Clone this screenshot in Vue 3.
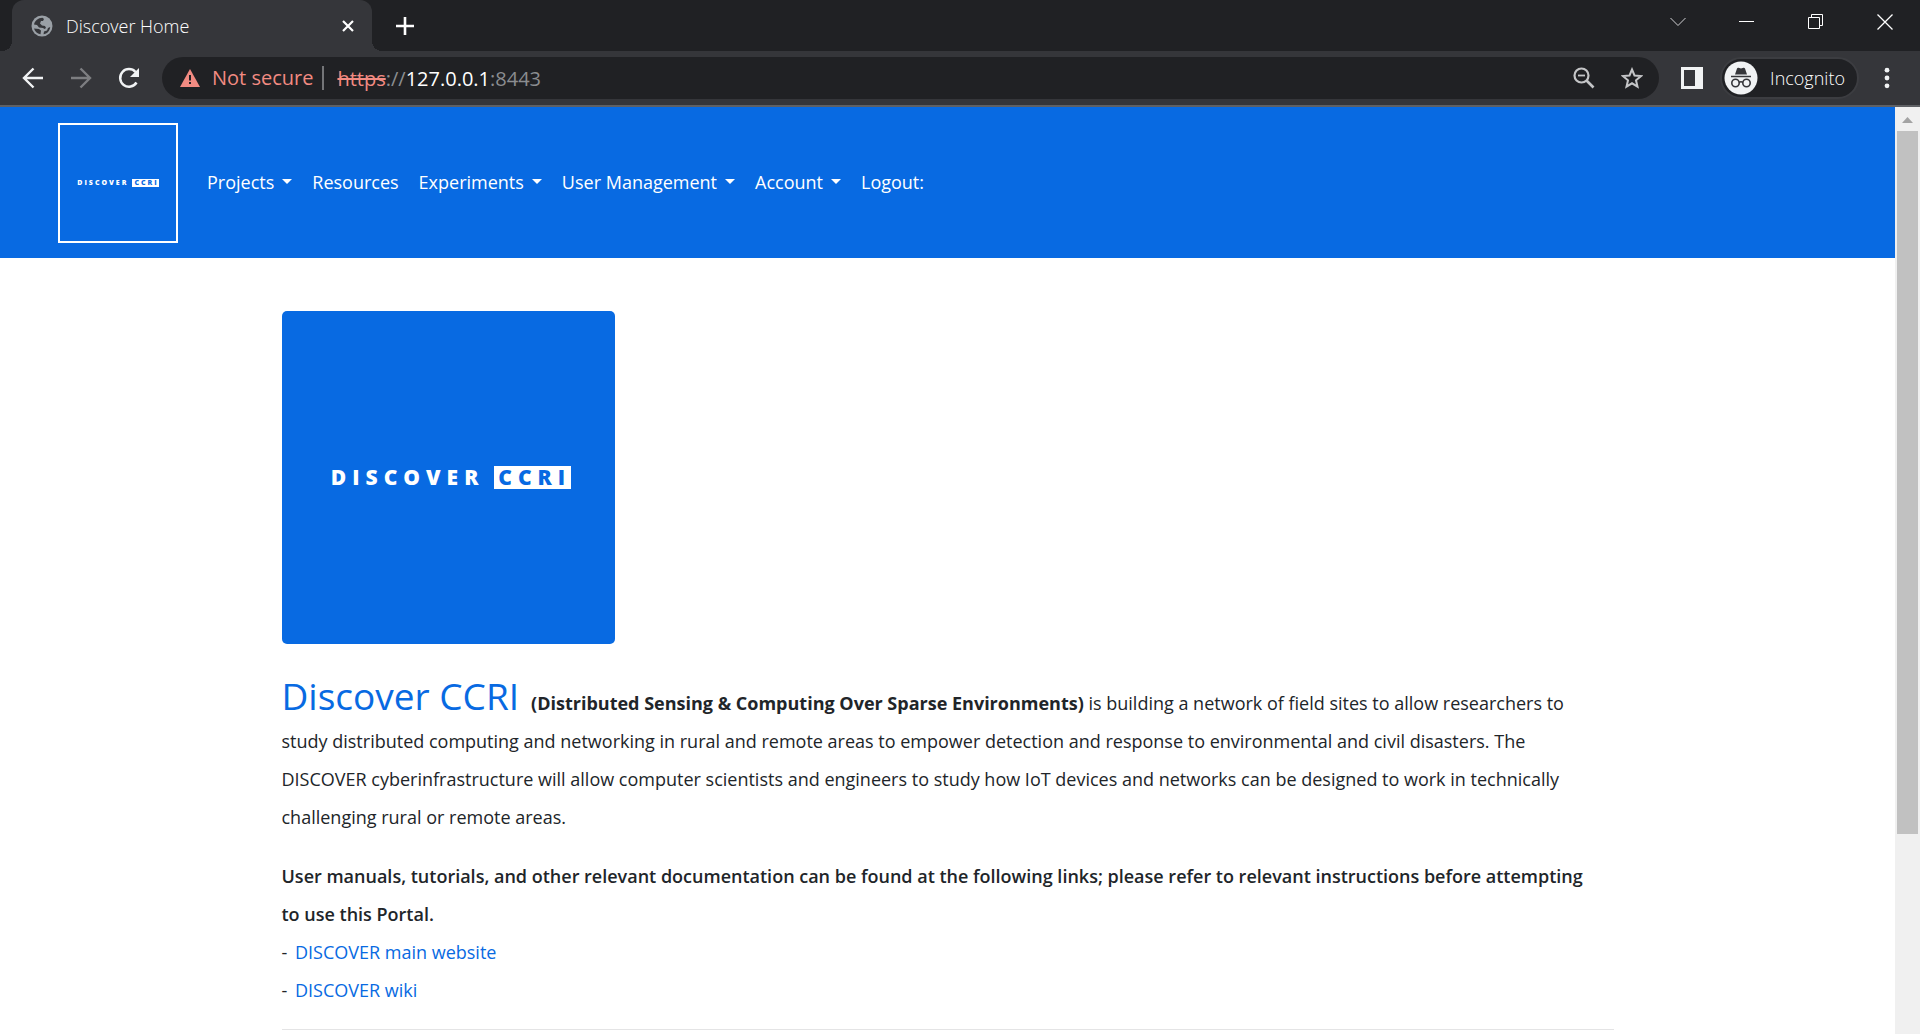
<script setup>
const navItems = [
  { label: 'Projects', menu: true },
  { label: 'Resources', menu: false },
  { label: 'Experiments', menu: true },
  { label: 'User Management', menu: true },
  { label: 'Account', menu: true },
  { label: 'Logout:', menu: false },
]
const docLinks = ['DISCOVER main website', 'DISCOVER wiki']
</script>

<template>
  <div class="browser">
    <header class="tab-strip">
      <div class="tab">
        <svg viewBox="0 0 22 22" width="22" height="22">
          <circle cx="11" cy="11" r="10.5" fill="#9aa0a6" />
          <path d="M3 9.500C4 5.500 7 3 11.500 2.800L13 4 12 6H10L9 8.500 11 10.500 14 11 15 13 13.500 14 12 13 8 12.500 6 10Z" fill="#35363a" />
          <path d="M3 13.500 8 14 10 15.500 9.500 19.300C6 18.800 3.800 16.500 3 13.500ZM12.500 19.300 13 16.500 16 15.500 17 13 19.200 12C18.700 16 16 19 12.500 19.300Z" fill="#35363a" />
        </svg>
        <span class="tab-title">Discover Home</span>
        <button class="icon-button" aria-label="Close tab">
          <svg viewBox="0 0 12 12" width="12" height="12" fill="none" stroke="#fff" stroke-width="2.200"><path d="M1 1l10 10M11 1 1 11" /></svg>
        </button>
      </div>
      <button class="icon-button new-tab" aria-label="New tab">
        <svg viewBox="0 0 18 18" width="18" height="18" fill="none" stroke="#fff" stroke-width="2.600"><path d="M9 0v18M0 9h18" /></svg>
      </button>
      <div class="window-controls">
        <button class="icon-button" aria-label="Search tabs">
          <svg viewBox="0 0 16 16" width="16" height="16" fill="none" stroke="#d0d1d3"><path d="M.5 4 8 11.500 15.500 4" /></svg>
        </button>
        <button class="icon-button" aria-label="Minimize">
          <svg viewBox="0 0 16 16" width="16" height="16" stroke="#fff"><path d="M0 7.500h15" /></svg>
        </button>
        <button class="icon-button" aria-label="Restore">
          <svg viewBox="0 0 16 16" width="16" height="16" fill="none" stroke="#fff"><path d="M.5 3.500h11v11H.5zM3.500 3.500v-3h11v11h-3" /></svg>
        </button>
        <button class="icon-button" aria-label="Close window">
          <svg viewBox="0 0 16 16" width="16" height="16" fill="none" stroke="#fff" stroke-width="1.300"><path d="M.5.500l15 15M15.500.500l-15 15" /></svg>
        </button>
      </div>
    </header>

    <div class="toolbar">
      <div class="history">
        <button class="icon-button" aria-label="Back">
          <svg viewBox="0 0 22 22" width="22" height="22" fill="none" stroke="#f1f3f4" stroke-width="2.400"><path d="M21 11H2.500M11.500 1.500 2 11l9.500 9.500" /></svg>
        </button>
        <button class="icon-button" aria-label="Forward">
          <svg viewBox="0 0 22 22" width="22" height="22" fill="none" stroke="#7d7e81" stroke-width="2.400"><path d="M1 11h18.500M10.500 1.500 20 11l-9.500 9.500" /></svg>
        </button>
        <button class="icon-button" aria-label="Reload">
          <svg viewBox="0 0 22 22" width="22" height="22"><path d="M18.500 15.500A8.800 8.800 0 1 1 17.500 5" fill="none" stroke="#f1f3f4" stroke-width="2.500" /><path d="M21 1v9h-9Z" fill="#f1f3f4" /></svg>
        </button>
      </div>
      <div class="omnibox">
        <svg viewBox="0 0 20 18" width="20" height="18"><path d="M10 0 20 18H0Z" fill="#f28b82" /><path d="M9 6h2v5.500H9zM9 13h2v2H9z" fill="#202124" /></svg>
        <span class="not-secure">Not secure</span>
        <label class="scheme" for="host"><s>https</s>://</label>
        <input id="host" class="host" value="127.0.0.1" />
        <span class="port">:8443</span>
        <div class="omnibox-actions">
          <button class="icon-button" aria-label="Zoom">
            <svg viewBox="0 0 22 22" width="22" height="22" fill="none" stroke="#c4c5c7" stroke-width="2.200"><circle cx="8.500" cy="8.500" r="7" /><path d="M5 8.500h7" stroke-width="1.800" /><path d="m13.500 13.500 7 7" stroke-width="2.600" /></svg>
          </button>
          <button class="icon-button" aria-label="Bookmark">
            <svg viewBox="0 0 22 22" width="22" height="22" fill="none" stroke="#c4c5c7" stroke-width="2"><path d="m11 2.500 2.500 6 6.500.6-5 4.200 1.500 6.400L11 16.300 5.500 19.700 7 13.300 2 9.100l6.500-.6Z" /></svg>
          </button>
        </div>
      </div>
      <button class="icon-button" aria-label="Side panel">
        <svg viewBox="0 0 22 22" width="22" height="22"><path d="M0 0h22v22H0z" fill="#f1f3f4" /><path d="M3 3h11v16H3z" fill="#35363a" /></svg>
      </button>
      <button class="incognito">
        <svg viewBox="0 0 34 34" width="34" height="34">
          <circle cx="17" cy="17" r="16.500" fill="#f1f3f4" />
          <path d="m11 13.500 2-6q.5-1 1.500-.7l2.500.7 2.500-.7q1-.3 1.500.7l2 6Z" fill="#35363a" />
          <path d="M7 15.500h20" stroke="#35363a" stroke-width="1.500" />
          <g fill="none" stroke="#35363a" stroke-width="1.600"><circle cx="11.500" cy="22" r="3.700" /><circle cx="22.500" cy="22" r="3.700" /><path d="M15 21.500q2-1.500 4 0" /></g>
        </svg>
        <span>Incognito</span>
      </button>
      <button class="icon-button" aria-label="Menu">
        <svg viewBox="0 0 6 22" width="6" height="22" fill="#f1f3f4"><circle cx="3" cy="3.200" r="2.400" /><circle cx="3" cy="11" r="2.400" /><circle cx="3" cy="18.800" r="2.400" /></svg>
      </button>
    </div>

    <div class="viewport">
      <div class="page">
        <nav class="navbar">
          <a class="brand" href="#"><span class="logo logo-small">DISCOVER<b>CCRI</b></span></a>
          <a v-for="item in navItems" :key="item.label" class="nav-link" href="#">{{ item.label }}<i v-if="item.menu" class="caret"></i></a>
        </nav>
        <main class="container">
          <div class="hero"><span class="logo logo-large">DISCOVER<b>CCRI</b></span></div>
          <p class="intro">
            <span class="title">Discover CCRI</span>
            <strong>(Distributed Sensing &amp; Computing Over Sparse Environments)</strong>
            is building a network of field sites to allow researchers to<br />
            study distributed computing and networking in rural and remote areas to empower detection and response to environmental and civil disasters. The DISCOVER cyberinfrastructure will allow computer scientists and engineers to study how IoT devices and networks can be designed to work in technically challenging rural or remote areas.
          </p>
          <div class="docs">
            <strong>User manuals, tutorials, and other relevant documentation can be found at the following links; please refer to relevant instructions before attempting<br />to use this Portal.</strong>
            <div v-for="link in docLinks" :key="link">- <a href="#">{{ link }}</a></div>
          </div>
          <hr />
        </main>
      </div>
      <div class="scrollbar">
        <svg viewBox="0 0 25 24" width="25" height="24"><path d="M7 16 12.500 10 18 16Z" fill="#a3a3a3" /></svg>
        <div class="thumb"></div>
      </div>
    </div>
  </div>
</template>

<style>
body {
  margin: 0;
}
</style>

<style scoped>
.browser {
  display: flex;
  flex-direction: column;
  height: 100vh;
  overflow: hidden;
  background: #fff;
  font-family: "Open Sans", "Noto Sans", sans-serif;
  font-size: 18px;
  color: #212529;
}
.browser * {
  box-sizing: border-box;
}
svg {
  display: block;
  flex: none;
}
button {
  font: inherit;
  color: inherit;
  border: 0;
  padding: 0;
  background: none;
}
a {
  color: #086ae2;
  text-decoration: none;
}
.icon-button {
  display: flex;
  flex: none;
}
.tab-strip {
  display: flex;
  align-items: center;
  height: 51px;
  flex: none;
  padding: 0 27px 0 12px;
  background: #202124;
}
.tab {
  position: relative;
  display: flex;
  align-items: center;
  gap: 13px;
  width: 360px;
  height: 51px;
  padding: 0 18px 0 19px;
  background: #35363a;
  border-radius: 12px 12px 0 0;
}
.tab::before,
.tab::after {
  content: "";
  position: absolute;
  bottom: 0;
  width: 10px;
  height: 10px;
}
.tab::before {
  right: 100%;
  background: radial-gradient(circle at 0 0, #202124 10px, #35363a 10px);
}
.tab::after {
  left: 100%;
  background: radial-gradient(circle at 100% 0, #202124 10px, #35363a 10px);
}
.tab-title {
  flex: 1;
  font-weight: 300;
  color: #fff;
}
.new-tab {
  margin-left: 24px;
}
.window-controls {
  display: flex;
  gap: 53px;
  margin-left: auto;
  padding-bottom: 8px;
}
.toolbar {
  display: flex;
  align-items: center;
  height: 56px;
  flex: none;
  padding: 0 30px 0 22px;
  background: #35363a;
  border-bottom: 2px solid #5f6165;
}
.history {
  display: flex;
  gap: 26px;
  margin-right: 22px;
}
.omnibox {
  display: flex;
  flex: 1;
  align-items: center;
  height: 42px;
  margin-right: 22px;
  padding: 0 16px 0 18px;
  border-radius: 21px;
  background: #202124;
  font-size: 20px;
  color: #8b8d90;
}
.not-secure {
  margin: 0 13px 0 12px;
  padding-right: 9px;
  border-right: 2px solid #747578;
  line-height: 24px;
  color: #f28b82;
}
.scheme s {
  color: #f28b82;
}
.host {
  field-sizing: content;
  border: 0;
  padding: 0;
  background: none;
  font: inherit;
  color: #fff;
  outline: 0;
}
.omnibox-actions {
  display: flex;
  gap: 26px;
  margin-left: auto;
}
.incognito {
  display: flex;
  align-items: center;
  gap: 12px;
  height: 42px;
  margin: 0 25px 0 17px;
  padding: 0 12px 0 2px;
  border: 2px solid #3c3d41;
  border-radius: 21px;
  background: #202124;
  font-weight: 300;
  color: #fff;
}
.viewport {
  display: flex;
  flex: 1;
  min-height: 0;
}
.page {
  flex: 1;
  overflow: hidden;
}
.navbar {
  display: flex;
  align-items: center;
  height: 151px;
  padding-left: 58px;
  background: #086ae2;
}
.brand {
  display: flex;
  align-items: center;
  justify-content: center;
  width: 120px;
  height: 120px;
  margin-right: 19px;
  border: 2px solid #fff;
}
.nav-link {
  display: flex;
  align-items: center;
  padding: 0 10px 2px;
  color: #fff;
}
.caret {
  margin-left: 8px;
  border: 5px solid transparent;
  border-top-color: #fff;
  border-bottom: 0;
}
.logo {
  display: flex;
  align-items: center;
  font-weight: 800;
  color: #fff;
}
.logo b {
  font-weight: 800;
  color: #086ae2;
  background: #fff;
}
.logo-small {
  font-size: 7px;
  line-height: 8px;
  letter-spacing: 2px;
}
.logo-small b {
  margin-left: 4px;
  padding-left: 2px;
}
.logo-large {
  font-size: 21px;
  line-height: 23px;
  letter-spacing: 6px;
}
.logo-large b {
  margin-left: 10px;
  padding-left: 4px;
}
.container {
  max-width: 1332px;
  margin: 0 auto;
  padding-top: 53px;
  line-height: 38px;
}
.hero {
  display: flex;
  align-items: center;
  justify-content: center;
  width: 333px;
  height: 333px;
  padding-left: 6px;
  border-radius: 5px;
  background: #086ae2;
}
.intro {
  margin: 33px 0 21px;
}
.title {
  margin-right: 12px;
  font-size: 37px;
  font-weight: 500;
  color: #086ae2;
}
.docs strong {
  font-weight: 650;
}
.docs a {
  margin-left: 3px;
}
hr {
  margin: 20px 0 0;
  border: 0;
  border-top: 1px solid #e4e4e5;
}
.scrollbar {
  display: grid;
  grid-template-rows: 24px 703fr 200fr;
  width: 25px;
  background: #f0f0f0;
}
.thumb {
  margin: 0 2px;
  background: #c1c1c1;
}
</style>
